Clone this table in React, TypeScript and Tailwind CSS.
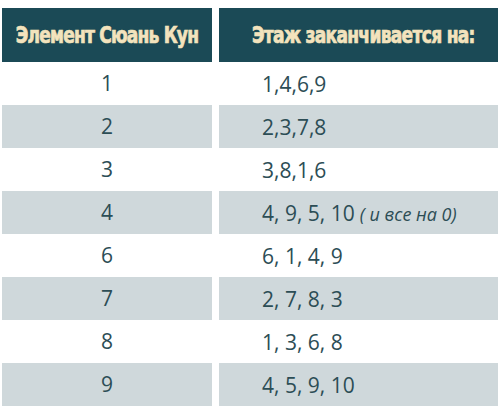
import React from "react";

const rows: { el: string; floors: string; note?: string }[] = [
  { el: "1", floors: "1,4,6,9" },
  { el: "2", floors: "2,3,7,8" },
  { el: "3", floors: "3,8,1,6" },
  { el: "4", floors: "4, 9, 5, 10", note: "( и все на 0)" },
  { el: "6", floors: "6, 1, 4, 9" },
  { el: "7", floors: "2, 7, 8, 3" },
  { el: "8", floors: "1, 3, 6, 8" },
  { el: "9", floors: "4, 5, 9, 10" },
];

const headFont = { fontFamily: '"DejaVu Sans Condensed", "DejaVu Sans", sans-serif' };

const App: React.FC = () => {
  return (
    <div className="w-[500px] h-[417px] bg-white pt-[8px] pl-[2px]">
      <div className="grid grid-cols-[210px_279px] gap-x-[7px]">
        <div className="h-[54px] bg-[#1b4a56] flex items-center justify-center">
          <span
            className="text-[#f3e3bd] text-[19px] font-bold tracking-[-0.8px] scale-y-[1.18] [-webkit-text-stroke:0.6px_#f3e3bd]"
            style={headFont}
          >
            Элемент Сюань Кун
          </span>
        </div>
        <div className="h-[54px] bg-[#1b4a56] flex items-center pl-[33px]">
          <span
            className="text-[#f3e3bd] text-[19px] font-bold tracking-[-0.7px] scale-y-[1.18] [-webkit-text-stroke:0.6px_#f3e3bd]"
            style={headFont}
          >
            Этаж заканчивается на:
          </span>
        </div>
        {rows.map((r, i) => {
          const bg = i % 2 === 1 ? "bg-[#cfd8db]" : "bg-white";
          return (
            <React.Fragment key={r.el}>
              <div
                className={`h-[43px] ${bg} flex items-center justify-center text-[21px] text-[#2c4d55] font-['Open_Sans',sans-serif]`}
              >
                {r.el}
              </div>
              <div
                className={`h-[43px] ${bg} flex items-center pl-[43px] pt-[2px] text-[21px] text-[#2c4d55] font-['Open_Sans',sans-serif]`}
              >
                <span>
                  {r.floors}
                  {r.note && (
                    <span className="ml-[5px] text-[18px] italic">{r.note}</span>
                  )}
                </span>
              </div>
            </React.Fragment>
          );
        })}
      </div>
    </div>
  );
};

export default App;
